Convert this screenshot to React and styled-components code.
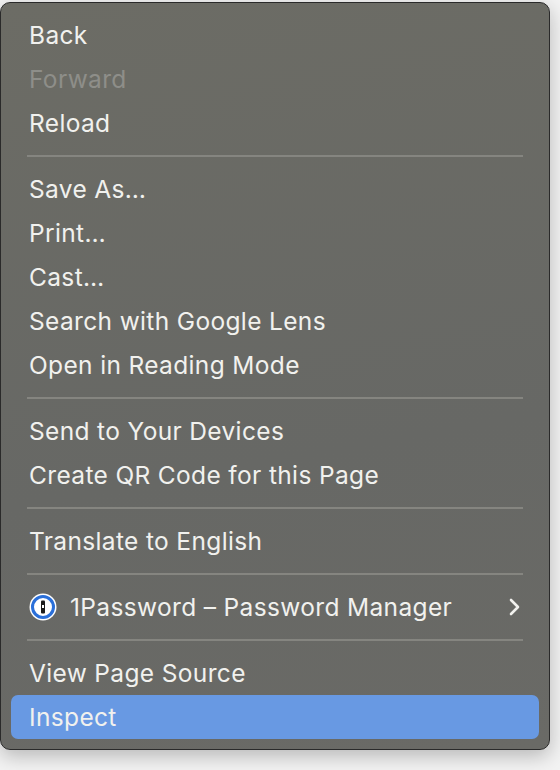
import React from "react";
import styled, { createGlobalStyle } from "styled-components";

const G = createGlobalStyle`
  body { margin: 0; background: #f4f4f4; font-family: "Inter", "Liberation Sans", sans-serif; }
`;
const Page = styled.div`
  width: 560px; height: 770px; position: relative; overflow: hidden;
  background: #f3f3f3;
`;
const Menu = styled.div`
  position: absolute; left: 0; top: 2px; width: 550px;
  padding: 10px 10px 10px; box-sizing: border-box;
  background: linear-gradient(170deg, #6c6c65 0%, #676865 60%, #6a6a66 100%);
  border: 1px solid #2a2a2a; border-radius: 10px;
  box-shadow: 0 6px 20px rgba(0,0,0,0.25);
  display: flex; flex-direction: column;
`;
const Item = styled.div`
  height: 44px; display: flex; align-items: center; padding: 0 17px 0 18px;
  font-size: 24.5px; letter-spacing: 0.35px; color: ${p => p.$disabled ? "#8e8e89" : "#f1f1ee"};
  border-radius: 7px; background: ${p => p.$active ? "#6899e3" : "transparent"};
  gap: 12px;
`;
const Sep = styled.div`
  height: 2px; background: #858580; margin: 10px 16px;
`;
const Grow = styled.span` flex: 1; `;

const Logo = () => (
  <svg width="30" height="30" viewBox="0 0 30 30" style={{ marginLeft: -1 }}>
    <circle cx="15" cy="15" r="13.5" fill="#fff" />
    <circle cx="15" cy="15" r="10.5" fill="none" stroke="#2a6fd9" strokeWidth="3" />
    <rect x="13" y="8.5" width="4" height="13" rx="1" fill="#1c1c1c" />
    <rect x="14" y="13" width="2" height="3" fill="#fff" />
  </svg>
);

export default function App() {
  return (
    <Page>
      <G />
      <Menu>
        <Item>Back</Item>
        <Item $disabled>Forward</Item>
        <Item>Reload</Item>
        <Sep />
        <Item>Save As…</Item>
        <Item>Print…</Item>
        <Item>Cast…</Item>
        <Item>Search with Google Lens</Item>
        <Item>Open in Reading Mode</Item>
        <Sep />
        <Item>Send to Your Devices</Item>
        <Item>Create QR Code for this Page</Item>
        <Sep />
        <Item>Translate to English</Item>
        <Sep />
        <Item><Logo /><Grow>1Password – Password Manager</Grow>
          <svg width="14" height="20" viewBox="0 0 14 20"><path d="M3 3l7 7-7 7" fill="none" stroke="#f1f1ee" strokeWidth="2.6" strokeLinecap="round" strokeLinejoin="round" /></svg>
        </Item>
        <Sep />
        <Item>View Page Source</Item>
        <Item $active>Inspect</Item>
      </Menu>
    </Page>
  );
}
